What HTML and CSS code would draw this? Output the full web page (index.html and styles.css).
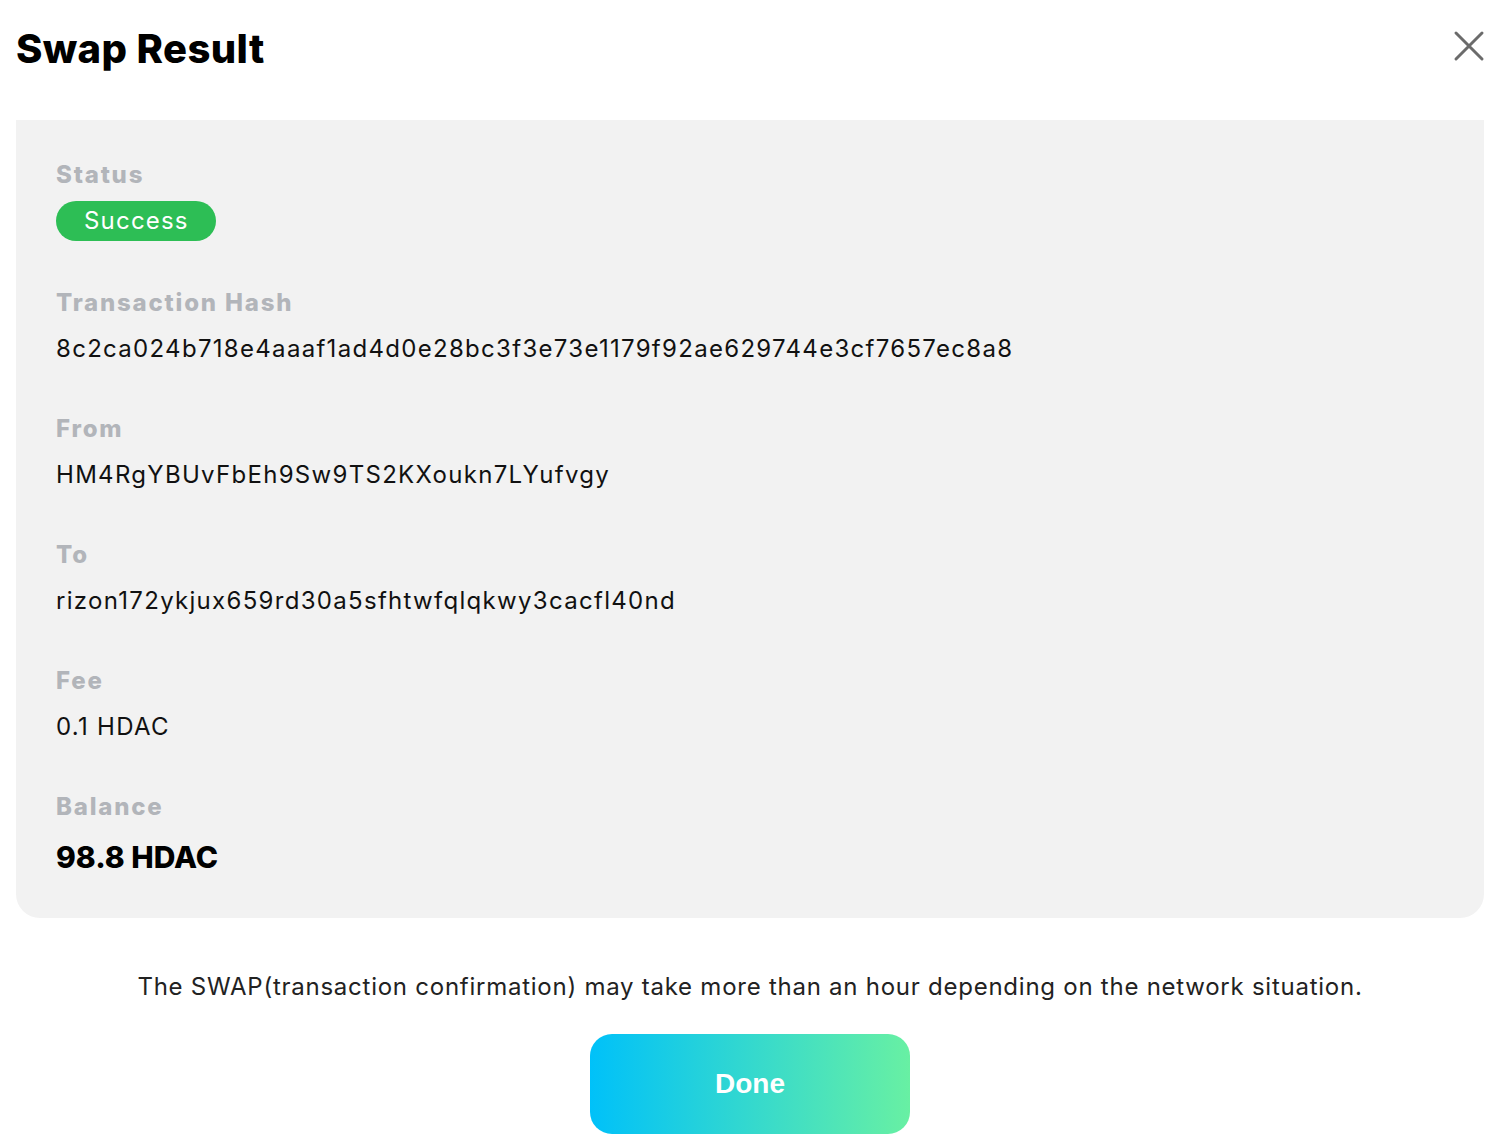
FILE: index.html
```html
<!DOCTYPE html>
<html lang="en">
<head>
  <meta charset="UTF-8" />
  <title>Swap Result</title>
  <link rel="stylesheet" href="styles.css">
</head>
<body>

  <div class="modal">
    <div class="modal-header">
      <h1>Swap Result</h1>
      <button class="btn-close" aria-label="Close">
        <svg width="32" height="32" viewBox="0 0 32 32">
          <path d="M3 3 L29 29 M29 3 L3 29" stroke="#6b6b6b" stroke-width="3" stroke-linecap="round" />
        </svg>
      </button>
    </div>

    <div class="result-box">
      <div class="result-item">
        <div class="result-label">Status</div>
        <span class="badge-success">Success</span>
      </div>
      <div class="result-item">
        <div class="result-label">Transaction Hash</div>
        <div class="result-value">8c2ca024b718e4aaaf1ad4d0e28bc3f3e73e1179f92ae629744e3cf7657ec8a8</div>
      </div>
      <div class="result-item">
        <div class="result-label">From</div>
        <div class="result-value">HM4RgYBUvFbEh9Sw9TS2KXoukn7LYufvgy</div>
      </div>
      <div class="result-item">
        <div class="result-label">To</div>
        <div class="result-value">rizon172ykjux659rd30a5sfhtwfqlqkwy3cacfl40nd</div>
      </div>
      <div class="result-item">
        <div class="result-label">Fee</div>
        <div class="result-value">0.1 HDAC</div>
      </div>
      <div class="result-item">
        <div class="result-label">Balance</div>
        <div class="result-value balance">98.8 HDAC</div>
      </div>
    </div>

    <p class="notice">The SWAP(transaction confirmation) may take more than an hour depending on the network situation.</p>

    <div class="actions">
      <button class="btn-done">Done</button>
    </div>
  </div>

</body>
</html>
```

FILE: styles.css
```css
body {
  margin: 0;
  background: #ffffff;
  font-family: 'Inter', 'Noto Sans', sans-serif;
  color: #111111;
}

.modal {
  padding: 0 16px;
}

.modal-header {
  height: 120px;
  display: flex;
  justify-content: space-between;
  align-items: flex-start;
}

.modal-header h1 {
  margin: 24px 0 0 0;
  font-size: 40px;
  line-height: 50px;
  font-weight: 800;
  color: #000;
  letter-spacing: 0.4px;
}

.btn-close {
  margin-top: 30px;
  margin-right: -1px;
  padding: 0;
  border: none;
  background: none;
  cursor: pointer;
  line-height: 0;
}

.result-box {
  background: #f2f2f2;
  border-radius: 0 0 24px 24px;
  padding: 37px 40px 41px 40px;
  display: flex;
  flex-direction: column;
  gap: 44px;
}

.result-label {
  font-size: 24px;
  line-height: 36px;
  font-weight: 800;
  color: #b2b5ba;
  letter-spacing: 1.8px;
}

.result-value {
  margin-top: 10px;
  font-size: 24px;
  line-height: 36px;
  color: #111;
  letter-spacing: 1.3px;
}

.result-value.balance {
  margin-top: 12px;
  font-size: 30px;
  line-height: 40px;
  font-weight: 800;
  color: #000;
  letter-spacing: 0;
}

.badge-success {
  display: inline-block;
  margin-top: 8px;
  height: 40px;
  line-height: 40px;
  padding: 0 27px 0 28px;
  border-radius: 20px;
  background: #2dbe55;
  color: #fff;
  font-size: 24px;
  letter-spacing: 1.2px;
}

.notice {
  margin: 51px 0 0 0;
  text-align: center;
  font-size: 24px;
  line-height: 36px;
  color: #222;
  letter-spacing: 0.75px;
}

.actions {
  display: flex;
  justify-content: center;
  margin-top: 29px;
}

.btn-done {
  width: 320px;
  height: 100px;
  border: none;
  border-radius: 22px;
  background: linear-gradient(90deg, #00c1f9 0%, #68f0a3 100%);
  color: #fff;
  font-family: 'Liberation Sans', Arial, sans-serif;
  font-size: 28px;
  font-weight: bold;
  cursor: pointer;
}
```
